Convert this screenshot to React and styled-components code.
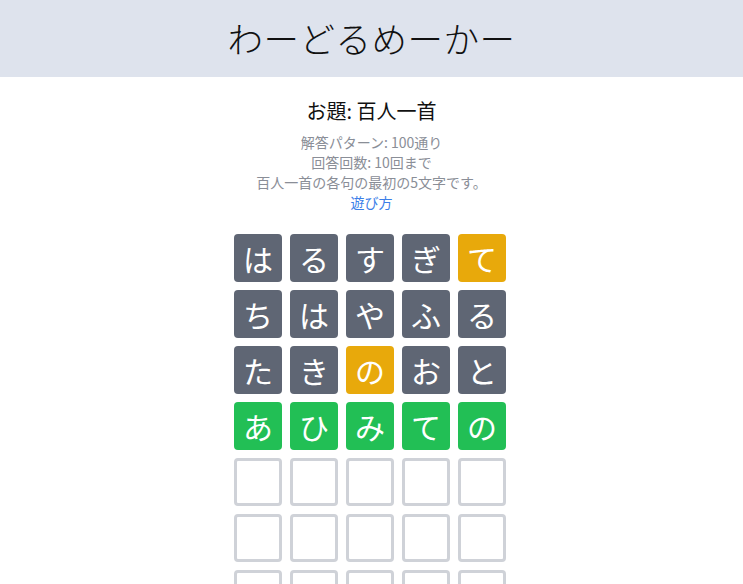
import React from "react";
import styled, { createGlobalStyle } from "styled-components";

const Global = createGlobalStyle`
  html, body { margin: 0; padding: 0; background: #ffffff; }
  body { font-family: "Noto Sans CJK JP", "Noto Sans", sans-serif; }
`;

const Page = styled.div`
  display: flex;
  flex-direction: column;
  align-items: center;
  width: 100%;
`;

const Header = styled.header`
  width: 100%;
  height: 77px;
  background: #dee3ed;
  display: flex;
  align-items: center;
  justify-content: center;
`;

const Logo = styled.h1`
  margin: 0 0 3px;
  font-family: "Noto Sans CJK JP", sans-serif;
  font-weight: 300;
  font-size: 35.5px;
  letter-spacing: 0.5px;
  color: #111;
`;

const Topic = styled.h2`
  margin: 20px 0 0;
  font-size: 20px;
  font-weight: 400;
  color: #111;
  line-height: 28px;
`;

const Info = styled.div`
  margin-top: 7px;
  display: flex;
  flex-direction: column;
  align-items: center;
  font-size: 14px;
  line-height: 20px;
  color: #8a8e97;
`;

const Link = styled.a`
  color: #3b7ee8;
  text-decoration: none;
`;

const Grid = styled.div`
  margin-top: 22px;
  display: grid;
  grid-template-columns: repeat(5, 48px);
  gap: 8px;
  margin-right: 3px;
`;

const colors = {
  absent: "#5f6674",
  present: "#e8a90b",
  correct: "#22bf55",
};

const Tile = styled.div`
  width: 48px;
  height: 48px;
  box-sizing: border-box;
  border-radius: 4px;
  display: flex;
  align-items: center;
  justify-content: center;
  font-size: 30px;
  color: #fff;
  background: ${(p) => (p.$state ? colors[p.$state] : "#fff")};
  border: ${(p) => (p.$state ? "none" : "3px solid #cfd2d8")};
`;

const rows = [
  [["は","absent"],["る","absent"],["す","absent"],["ぎ","absent"],["て","present"]],
  [["ち","absent"],["は","absent"],["や","absent"],["ふ","absent"],["る","absent"]],
  [["た","absent"],["き","absent"],["の","present"],["お","absent"],["と","absent"]],
  [["あ","correct"],["ひ","correct"],["み","correct"],["て","correct"],["の","correct"]],
];

export default function App() {
  const all = [...rows];
  for (let i = 0; i < 6; i++) all.push(Array(5).fill(["", null]));
  return (
    <Page>
      <Global />
      <Header>
        <Logo>わーどるめーかー</Logo>
      </Header>
      <Topic>お題: 百人一首</Topic>
      <Info>
        <span>解答パターン: 100通り</span>
        <span>回答回数: 10回まで</span>
        <span>百人一首の各句の最初の5文字です。</span>
        <Link href="#">遊び方</Link>
      </Info>
      <Grid>
        {all.flatMap((row, r) =>
          row.map(([ch, st], c) => (
            <Tile key={`${r}-${c}`} $state={st}>
              {ch}
            </Tile>
          ))
        )}
      </Grid>
    </Page>
  );
}
